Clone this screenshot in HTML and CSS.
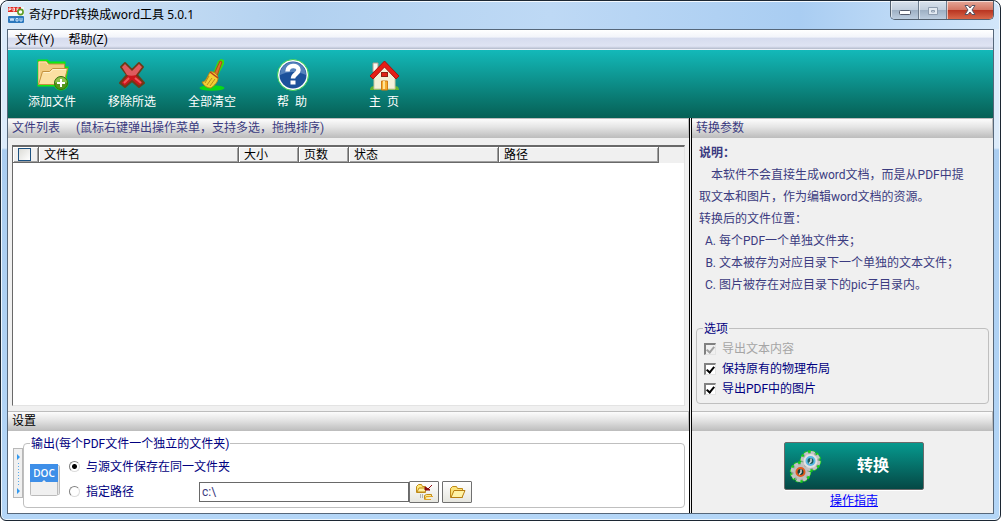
FILE: index.html
```html
<!DOCTYPE html>
<html lang="zh-CN">
<head>
    <meta charset="UTF-8">
    <meta name="viewport" content="width=device-width, initial-scale=1.0">
    <title>奇好PDF转换成word工具 5.0.1</title>
    <link rel="stylesheet" href="styles.css">
</head>
<body>
    <div class="window">
        <header class="titlebar">
            <svg class="app-icon" width="16" height="16" viewBox="0 0 16 16">
                <rect width="16" height="16" fill="#f4f8f4"/>
                <rect width="13" height="5" fill="#e02a22"/>
                <path d="M1 4V1h2v1.500H1M5 1v3h1.500V1zM9 4V1h2M9 2.500h2" fill="none" stroke="#fff" stroke-width=".8"/>
                <circle cx="12.500" cy="5" r="2.600" fill="#fff" stroke="#5b9b25" stroke-width="1.600"/>
                <rect y="9" width="16" height="7" rx="1" fill="#2c78bd"/>
                <path d="M2 11l1 3 1-3 1 3 1-3M8 11.500h2v2.500H8zM12 11v3h2v-3" fill="none" stroke="#d6ecff" stroke-width=".9"/>
            </svg>
            <h1 class="title">奇好PDF转换成word工具 5.0.1</h1>
            <div class="controls">
                <button class="control" aria-label="最小化">
                    <svg width="14" height="12" viewBox="0 0 14 12"><rect x="1.500" y="6.500" width="11" height="4" rx="1" fill="#fff" stroke="#535a6b"/></svg>
                </button>
                <button class="control" aria-label="最大化" disabled>
                    <svg width="12" height="12" viewBox="0 0 12 12"><path d="M1.500 3.500h9v7h-9zM4.500 6.500h3v1.500h-3z" fill="#e3eaf2" stroke="#8d9caf"/></svg>
                </button>
                <button class="control close" aria-label="关闭">
                    <svg width="14" height="12" viewBox="0 0 14 12"><path d="M2 1.500h3l2 2.500 2-2.500h3L9 6l3 4.500H9L7 8l-2 2.500H2L5 6z" fill="#fff" stroke="#555566"/></svg>
                </button>
            </div>
        </header>

        <div class="client">
            <nav class="menubar">
                <button class="menu">文件(Y)</button>
                <button class="menu">帮助(Z)</button>
            </nav>

            <div class="toolbar">
                <button class="tool">
                    <svg width="34" height="34" viewBox="0 0 34 34">
                        <g stroke="#12ea12" stroke-width="3" fill="#12ea12">
                            <path d="M4 27V3h8l2 2h15v5h3l-3 17z"/>
                            <circle cx="26" cy="25" r="6"/>
                        </g>
                        <path d="M3.500 26.500v-23h8l2 2.500h16v20.500z" fill="#f1cb80" stroke="#c3923f"/>
                        <path d="M4 25V4h7l2 3" fill="none" stroke="#fdeab8"/>
                        <path d="M3.500 26.500l4-13h7l3-3h15l-4 16z" fill="#fbe0a3" stroke="#c3923f"/>
                        <path d="M8.500 14.500h6.500l3-3h13" fill="none" stroke="#fff3cf"/>
                        <circle cx="26" cy="25" r="6.500" fill="#55941c" stroke="#356d10"/>
                        <path d="M20 25a6 6 0 0 1 12 0c-4-2-8-2-12 0z" fill="#8fc24a"/>
                        <path d="M26 21v8M22 25h8" stroke="#fff" stroke-width="2"/>
                    </svg>
                    <span>添加文件</span>
                </button>
                <button class="tool">
                    <svg width="34" height="34" viewBox="0 0 34 34">
                        <path d="M6 9l4-4 7 7 7-7 4 4-6 8 7 8-5 4-7-6-7 6-5-4 7-8z" fill="#c9161c" stroke="#6b3c18" stroke-width="2" stroke-linejoin="round"/>
                        <path d="M7 9l3-3 7 7 7-7 3 3-6 8c-3 1-6 1-9 0z" fill="#de5b5e"/>
                        <path d="M9 25l5-5M20 20l6 5" stroke="#f0575a" stroke-width="2"/>
                    </svg>
                    <span>移除所选</span>
                </button>
                <button class="tool">
                    <svg width="34" height="34" viewBox="0 0 34 34">
                        <ellipse cx="17" cy="30" rx="12.500" ry="2.800" fill="#09d818"/>
                        <path d="M18 15l5-12 3-2 3 1v4l-7 13z" fill="#3bdc10"/>
                        <path d="M19 16l6-13 2 1-5 14z" fill="#d9732d" stroke="#a84b1d"/>
                        <path d="M15 14c3-1 8 2 8 6 0 4-3 7-7 10-4 0-7-2-9-6 4 0 5-5 8-10z" fill="#f3ce35" stroke="#b48218"/>
                        <path d="M15 14l8 6" stroke="#b93a19" stroke-width="1.500"/>
                        <path d="M14 18l-4 7M17 20l-5 7M20 21l-5 7" stroke="#ba8b15"/>
                    </svg>
                    <span>全部清空</span>
                </button>
                <button class="tool">
                    <svg width="34" height="34" viewBox="0 0 34 34">
                        <circle cx="18" cy="17" r="15.500" fill="#fff" stroke="#3bd052"/>
                        <circle cx="18" cy="17" r="13.500" fill="#1c519b"/>
                        <path d="M5 17a13 13 0 0 1 26 0c-8-4-18-4-26 0z" fill="#5582bc"/>
                        <path d="M12.500 13.500c0-7 11-7 11-1.500 0 4-5.500 4-5.500 8.500" fill="none" stroke="#fff" stroke-width="4.500"/>
                        <rect x="15.500" y="22.500" width="5" height="4" fill="#fff"/>
                    </svg>
                    <span class="spaced">帮  助</span>
                </button>
                <button class="tool home">
                    <svg width="34" height="34" viewBox="0 0 34 34">
                        <path d="M3 32c0-4 4-5 6-2 2 2 14 2 17 0 3-3 6-2 6 2z" fill="#66b52f"/>
                        <path d="M6 5h5v9H6z" fill="#faf5ee" stroke="#b59d8d"/>
                        <path d="M7 31V17L17 7l11 10v14z" fill="#f3f0d8" stroke="#c9c7a0"/>
                        <path d="M3 18L17.500 3 32 18l-3 3L17.500 9 6 21z" fill="#e51e16" stroke="#a5120c"/>
                        <rect x="14.500" y="14.500" width="6" height="4" fill="#e12317" stroke="#8d2112"/>
                        <path d="M14.500 32v-9h6v9z" fill="#f5ad2e" stroke="#d07b16"/>
                        <path d="M17 23v8" stroke="#ffe194" stroke-width="2"/>
                    </svg>
                    <span class="spaced">主  页</span>
                </button>
            </div>

            <div class="workspace">
                <main class="pane files-pane">
                    <h2 class="bar">文件列表<span class="hint">(鼠标右键弹出操作菜单，支持多选，拖拽排序)</span></h2>
                    <div class="list-area">
                        <div class="file-list">
                            <table class="files">
                                <colgroup>
                                    <col class="col-check">
                                    <col class="col-name">
                                    <col class="col-size">
                                    <col class="col-pages">
                                    <col class="col-status">
                                    <col class="col-path">
                                </colgroup>
                                <thead>
                                    <tr>
                                        <th><input type="checkbox" class="check-all" aria-label="全选"></th>
                                        <th>文件名</th>
                                        <th>大小</th>
                                        <th>页数</th>
                                        <th>状态</th>
                                        <th>路径</th>
                                    </tr>
                                </thead>
                                <tbody></tbody>
                            </table>
                        </div>
                    </div>
                    <h2 class="bar dark">设置</h2>
                    <form class="settings">
                        <div class="handle">
                            <svg width="8" height="48" viewBox="0 0 8 48">
                                <path d="M3 5l3 3-3 3zM3 39l3 3-3 3z" fill="#3399ee"/>
                                <path d="M4.500 14v23" stroke="#55aaee" stroke-dasharray="1 2"/>
                            </svg>
                        </div>
                        <fieldset class="group output">
                            <legend>输出(每个PDF文件一个独立的文件夹)</legend>
                            <div class="output-body">
                                <svg class="doc-icon" width="30" height="32" viewBox="0 0 30 32">
                                    <rect x="3.500" y="1.500" width="26" height="29" rx="1" fill="#e5e5e5" stroke="#bbb"/>
                                    <rect x=".5" y="1.500" width="27" height="30" rx="1" fill="#f0f0f0" stroke="#bbb"/>
                                    <path d="M0 0h28v18H16l-2-2-2 2H0z" fill="#3e8fe8"/>
                                    <text class="doc-text" x="14" y="13" text-anchor="middle">DOC</text>
                                </svg>
                                <div class="choices">
                                    <div class="choice">
                                        <input type="radio" class="radio" name="output" id="same" checked>
                                        <label for="same">与源文件保存在同一文件夹</label>
                                    </div>
                                    <div class="choice">
                                        <input type="radio" class="radio" name="output" id="custom">
                                        <label class="path-label" for="custom">指定路径</label>
                                        <input type="text" class="path" value="c:\" aria-label="指定路径">
                                        <button type="button" class="small-button" aria-label="选择文件夹">
                                            <svg width="20" height="18" viewBox="0 0 20 18">
                                                <path d="M2.500 9.500v-6l2-2h3l1 2h3v6z" fill="#ffe97b" stroke="#c08a18"/>
                                                <path d="M3 9l2-4h8l-2 4z" fill="#fff2a2" stroke="#c08a18"/>
                                                <path d="M18 2l-4 4M11 4v3h5z" stroke="#8b0b10" fill="#8b0b10"/>
                                                <path d="M10.500 16.500v-4l2-1h5v2" fill="#ffec8a" stroke="#c08a18"/>
                                                <path d="M11 16.500l1-3h7M11 16.500h6" fill="none" stroke="#e0a52a"/>
                                                <path d="M6 12h3M6 14h3" stroke="#777" stroke-dasharray="1 1"/>
                                            </svg>
                                        </button>
                                        <button type="button" class="small-button" aria-label="打开文件夹">
                                            <svg width="18" height="16" viewBox="0 0 18 16">
                                                <path d="M2.500 13.500v-9l2-2h4l1 2h5v9z" fill="#fce47a" stroke="#c08a18"/>
                                                <path d="M3 13.500l3-7h11l-3 7z" fill="#fff3a5" stroke="#b87e10"/>
                                            </svg>
                                        </button>
                                    </div>
                                </div>
                            </div>
                        </fieldset>
                    </form>
                </main>

                <aside class="pane params-pane">
                    <h2 class="bar">转换参数</h2>
                    <div class="params">
                        <div class="notes">
                            <h3>说明：</h3>
                            <p class="indent">本软件不会直接生成word文档，而是从PDF中提取文本和图片，作为编辑word文档的资源。</p>
                            <p>转换后的文件位置：</p>
                            <ol>
                                <li>每个PDF一个单独文件夹；</li>
                                <li>文本被存为对应目录下一个单独的文本文件；</li>
                                <li>图片被存在对应目录下的pic子目录内。</li>
                            </ol>
                        </div>
                        <fieldset class="group options">
                            <legend>选项</legend>
                            <label class="option disabled"><input type="checkbox" class="check" checked disabled>导出文本内容</label>
                            <label class="option"><input type="checkbox" class="check" checked>保持原有的物理布局</label>
                            <label class="option"><input type="checkbox" class="check" checked>导出PDF中的图片</label>
                        </fieldset>
                    </div>
                    <div class="bar"></div>
                    <div class="actions">
                        <button class="convert">
                            <svg width="34" height="34" viewBox="0 0 34 34">
                                <g stroke="#18d018" stroke-width="2.500" stroke-dasharray="3 1.200" fill="#999">
                                    <circle cx="21.500" cy="12" r="9.500"/>
                                    <circle cx="11.500" cy="23" r="9.500"/>
                                </g>
                                <g stroke="#c4c4c4" stroke-width="4" stroke-dasharray="3.700 2.580" fill="#aaa">
                                    <circle cx="21.500" cy="12" r="8"/>
                                    <circle cx="11.500" cy="23" r="8"/>
                                </g>
                                <circle cx="21.500" cy="12" r="7" fill="#e2e2e2"/>
                                <circle cx="11.500" cy="23" r="7" fill="#bfbfbf"/>
                                <circle cx="21.500" cy="12" r="4" fill="#175b5b" stroke="#59b9e5" stroke-width="2"/>
                                <circle cx="11.500" cy="23" r="4" fill="#17403d" stroke="#e25a1d" stroke-width="2"/>
                                <path d="M22 9.500v3l-2 2M12 20.500v3l-2 2" fill="none" stroke="#d8d8d8" stroke-width="1.500"/>
                            </svg>
                            <span>转换</span>
                        </button>
                        <a class="guide" href="#">操作指南</a>
                    </div>
                </aside>
            </div>
        </div>
    </div>
</body>
</html>
```
FILE: styles.css
```css
* {
    box-sizing: border-box;
}
body {
    margin: 0;
    background: #fff;
    font-family: Roboto, "Noto Sans CJK SC", sans-serif;
    font-size: 12px;
    line-height: 16px;
    color: #000;
}
h1, h2, h3, p, ol {
    margin: 0;
    padding: 0;
    font-size: 12px;
    font-weight: normal;
}
button, input {
    font: inherit;
    margin: 0;
    padding: 0;
}
svg {
    display: block;
}

/* window frame */
.window {
    display: flex;
    flex-direction: column;
    min-height: 100vh;
    padding: 0 6px 6px;
    border: 1px solid #1c2733;
    border-radius: 8px 8px 6px 6px;
    background: linear-gradient(#dcebfa 0, #dcebfa 147px, #aacdf0 149px, #b4d6f7 100%);
    box-shadow: inset 0 0 0 1px #eef6fd;
}
.titlebar {
    display: flex;
    align-items: center;
    height: 28px;
    margin: 0 -5px;
    padding-left: 6px;
    border-radius: 7px 7px 0 0;
    background: linear-gradient(90deg, #dbe9f7 0, #c3dbf3 15%, #b2d1f0 30%, #bed9f5 55%, #a9cdf2 80%, #d2e6fa 100%);
    box-shadow: inset 0 1px 0 #f3f9ff;
}
.title {
    flex: 1;
    padding-left: 5px;
    font-family: "Noto Sans", "Noto Sans CJK SC", sans-serif;
}
.controls {
    display: flex;
    align-self: flex-start;
    margin-right: 5px;
    border: 1px solid #52606f;
    border-top: 0;
    border-radius: 0 0 5px 5px;
    overflow: hidden;
}
.control {
    display: flex;
    justify-content: center;
    align-items: center;
    width: 28px;
    height: 18px;
    border: 0;
    border-right: 1px solid #6d7c8d;
    background: linear-gradient(#d8e2ed 0, #c2cfde 48%, #9dafc3 50%, #bccddf 100%);
    box-shadow: inset 1px 1px 0 rgba(255,255,255,0.6);
}
.control.close {
    width: 46px;
    border-right: 0;
    background: linear-gradient(#e5a798 0, #d47764 48%, #b83320 50%, #d8684a 100%);
}
.client {
    display: flex;
    flex-direction: column;
    flex: 1;
    border: 1px solid #56677a;
    background: #f0f0f0;
}

/* menu and toolbar */
.menubar {
    display: flex;
    height: 20px;
    padding: 1px 0 0 7px;
    gap: 14px;
    border-bottom: 1px solid #eef0f7;
    background: linear-gradient(#fff 0, #f2f4fa 38%, #d6dcee 42%, #dfe4f3 85%, #b3bacb 100%);
}
.menu {
    height: 18px;
    border: 0;
    background: none;
}
.toolbar {
    display: flex;
    height: 68px;
    padding: 8px 4px;
    background: linear-gradient(#13b9b9 0, #066055 100%);
}
.tool {
    display: flex;
    flex-direction: column;
    align-items: center;
    gap: 2px;
    width: 80px;
    border: 0;
    background: none;
    color: #fff;
}
.tool.home {
    margin-left: 12px;
}
.spaced {
    white-space: pre;
}

/* panes */
.workspace {
    display: flex;
    flex: 1;
}
.pane {
    display: flex;
    flex-direction: column;
}
.files-pane {
    flex: 1;
    min-width: 0;
}
.params-pane {
    width: 304px;
    border-left: 3px double #000;
}
.bar {
    height: 20px;
    padding-left: 4px;
    border: 1px solid #bdbdbd;
    border-width: 1px 1px 0 0;
    background: linear-gradient(#fcfcfc 0, #e6e6e6 40%, #bcbcbc 100%);
    line-height: 18px;
    color: #3b3b80;
}
.bar.dark {
    color: #000;
}
.hint {
    margin-left: 16px;
}

/* file list */
.list-area {
    display: flex;
    flex: 1;
    padding: 7px 4px 5px;
}
.file-list {
    flex: 1;
    border: 1px solid #696969;
    border-width: 2px 1px 1px;
    border-right-color: #e3e3e3;
    border-bottom-color: #e3e3e3;
    background: linear-gradient(#f0f0f0 0, #f0f0f0 16px, #fff 16px);
}
.files {
    table-layout: fixed;
    width: 646px;
    border-collapse: separate;
    border-spacing: 0;
}
.files th {
    height: 16px;
    padding: 1px 0 0 5px;
    border: 1px solid #696969;
    border-width: 0 1px 1px 0;
    box-shadow: inset 1px 1px 0 #fff, inset -1px -1px 0 #a0a0a0;
    background: #f0f0f0;
    font-weight: normal;
    line-height: 14px;
    text-align: left;
}
.files th:first-child {
    padding: 0 0 0 5px;
}
.col-check {
    width: 26px;
}
.col-name {
    width: 200px;
}
.col-size {
    width: 60px;
}
.col-pages {
    width: 50px;
}
.col-status {
    width: 150px;
}
.col-path {
    width: 160px;
}
.check-all {
    display: block;
    appearance: none;
    width: 13px;
    height: 13px;
    border: 1px solid #1c5180;
    background: linear-gradient(135deg, #dcdcd7, #fff);
}

/* grouped boxes */
.group {
    min-width: 0;
    margin: 0;
    padding: 0;
    border: 1px solid #bfbfbf;
    border-radius: 4px;
    color: #000080;
}
.group legend {
    margin-left: 6px;
    padding: 1px 1px 0;
}

/* output settings */
.settings {
    display: flex;
    height: 82px;
    padding: 4px 4px 5px 5px;
    background: #fff;
}
.handle {
    width: 10px;
    height: 50px;
    margin-top: 13px;
    border: 1px solid #b8b8b8;
    background: #f0f0f0;
}
.output {
    flex: 1;
}
.output-body {
    display: flex;
    padding-left: 6px;
}
.doc-icon {
    margin-top: 12px;
}
.doc-text {
    fill: #fff;
    font-family: "Open Sans", sans-serif;
    font-size: 10px;
    font-weight: 600;
}
.choices {
    padding: 2px 0 0 9px;
}
.choice {
    display: flex;
    align-items: center;
    height: 25px;
}
.radio {
    appearance: none;
    width: 11px;
    height: 11px;
    margin-right: 6px;
    border: 1px solid #808080;
    border-right-color: #dcdcdc;
    border-bottom-color: #dcdcdc;
    border-radius: 50%;
    background: #fff;
}
.radio:checked {
    background: radial-gradient(circle, #000 2px, #fff 3px);
}
.path-label {
    width: 113px;
}
.path {
    width: 210px;
    height: 20px;
    padding-left: 2px;
    border: 1px solid #696969;
    background: #fff;
    color: #3b3b80;
}
.small-button {
    display: flex;
    justify-content: center;
    align-items: center;
    width: 30px;
    height: 22px;
    margin-right: 3px;
    border: 1px solid #707070;
    border-radius: 1px;
    background: linear-gradient(#fff, #e6e6df);
}

/* conversion notes */
.params {
    display: flex;
    flex-direction: column;
    flex: 1;
    padding: 4px 4px 7px;
}
.notes {
    flex: 1;
    padding: 0 24px 0 3px;
    line-height: 22px;
    color: #3b3b80;
}
.notes h3 {
    font-weight: bold;
}
.notes p, .notes li {
    white-space: nowrap;
}
.notes .indent {
    white-space: normal;
    text-indent: 12px;
}
.notes ol {
    padding-left: 20px;
    list-style: upper-alpha;
}
.options {
    height: 84px;
}
.options legend {
    margin-bottom: 2px;
}
.option {
    display: flex;
    align-items: center;
    height: 20px;
    padding-left: 7px;
}
.option.disabled {
    color: #a5a5a5;
}
.check {
    appearance: none;
    position: relative;
    width: 12px;
    height: 12px;
    margin-right: 6px;
    border: 1px solid #e3e3e3;
    border-top: 2px solid #808080;
    border-left: 2px solid #808080;
    background: #fff;
}
.check:checked::after {
    content: "";
    position: absolute;
    left: 2px;
    top: 0;
    width: 3px;
    height: 6px;
    border: solid #000;
    border-width: 0 2px 2px 0;
    transform: rotate(40deg);
}
.check:disabled {
    background: #f0f0f0;
}
.check:disabled::after {
    border-color: #a0a0a0;
}
.actions {
    display: flex;
    flex-direction: column;
    align-items: center;
    height: 82px;
    padding: 11px 0 0 23px;
}
.convert {
    display: flex;
    align-items: center;
    width: 140px;
    height: 48px;
    padding-left: 4px;
    border: 1px solid #6a6a6a;
    border-radius: 2px;
    background: linear-gradient(#06998e 0, #054845 100%);
    box-shadow: 0 1px 0 #fff;
    color: #fff;
    font-size: 16px;
    font-weight: bold;
}
.convert span {
    flex: 1;
}
.guide {
    margin-top: 3px;
    color: #00f;
}
```
